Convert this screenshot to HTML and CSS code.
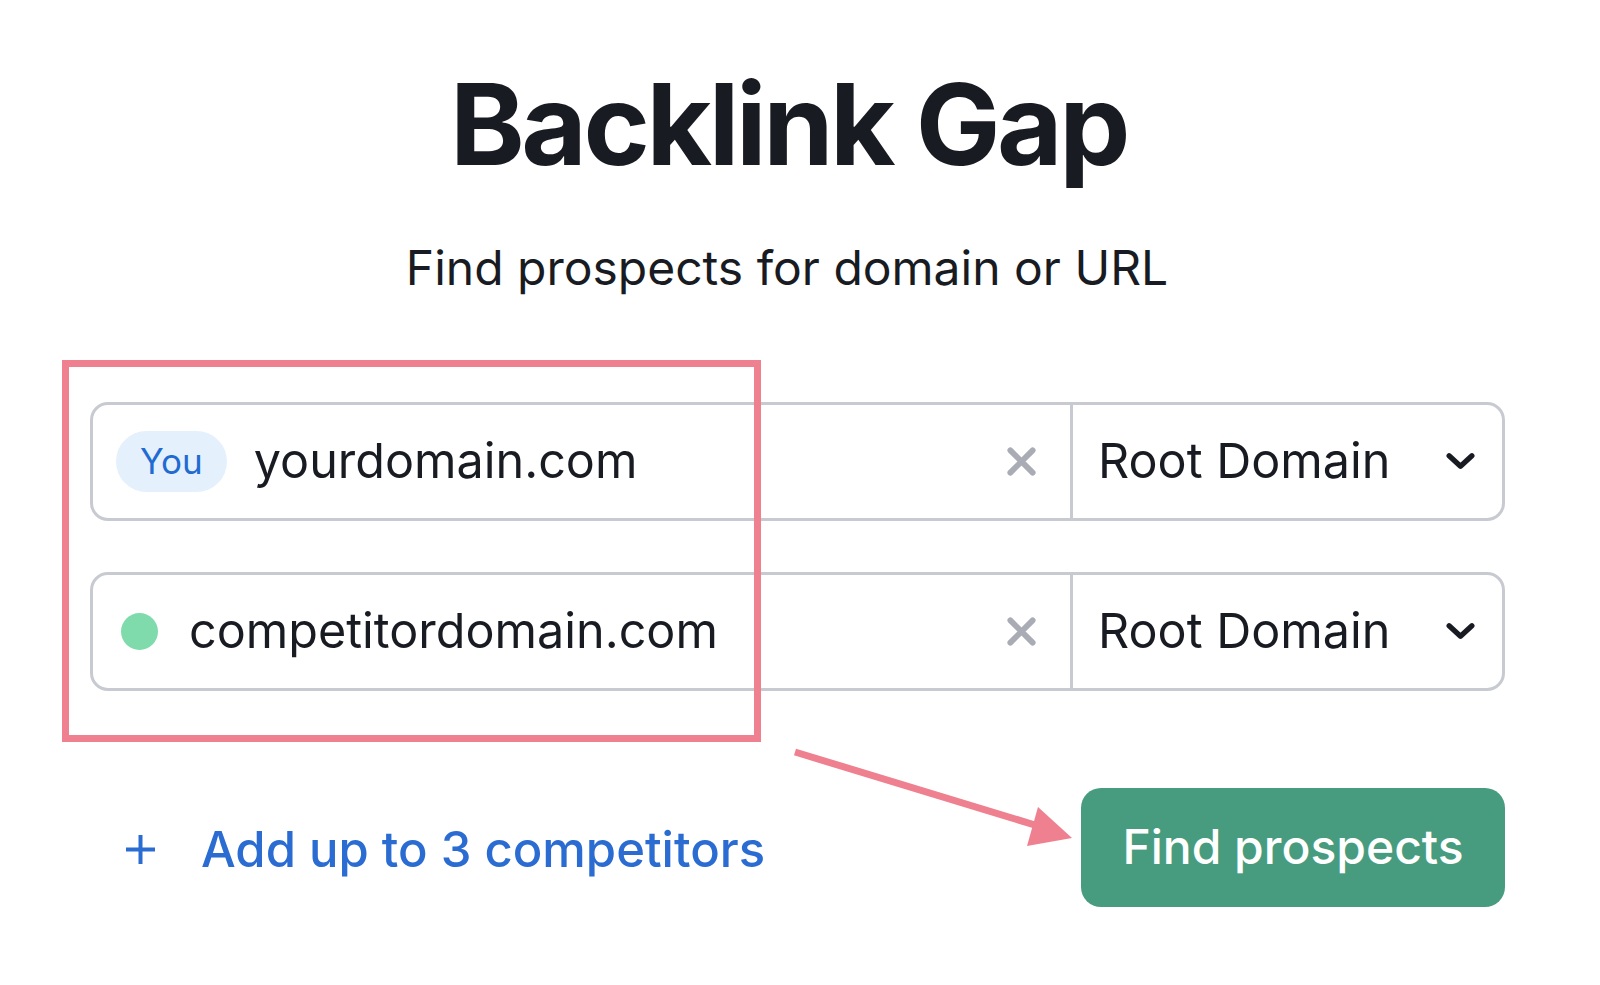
FILE: index.html
```html
<!DOCTYPE html>
<html lang="en">
<head>
<meta charset="utf-8">
<title>Backlink Gap</title>
<link rel="stylesheet" href="styles.css">
</head>
<body>
<main class="page">
  <h1 class="title">Backlink Gap</h1>
  <p class="subtitle">Find prospects for domain or URL</p>
  <div class="form">
    <div class="row">
      <div class="field">
        <span class="badge">You</span>
        <span class="value">yourdomain.com</span>
        <svg class="clear" viewBox="0 0 32 32" width="31" height="31"><path d="M4.5 4.5L27.5 27.5M27.5 4.5L4.5 27.5" stroke="#a9abb5" stroke-width="6" stroke-linecap="round" fill="none"/></svg>
      </div>
      <div class="select">
        <span class="select-text">Root Domain</span>
        <svg class="chev" viewBox="0 0 32 20" width="31" height="19"><path d="M4 4L16 15L28 4" stroke="#191b23" stroke-width="5.5" stroke-linecap="round" stroke-linejoin="round" fill="none"/></svg>
      </div>
    </div>
    <div class="row">
      <div class="field">
        <span class="dot"></span>
        <span class="value">competitordomain.com</span>
        <svg class="clear" viewBox="0 0 32 32" width="31" height="31"><path d="M4.5 4.5L27.5 27.5M27.5 4.5L4.5 27.5" stroke="#a9abb5" stroke-width="6" stroke-linecap="round" fill="none"/></svg>
      </div>
      <div class="select">
        <span class="select-text">Root Domain</span>
        <svg class="chev" viewBox="0 0 32 20" width="31" height="19"><path d="M4 4L16 15L28 4" stroke="#191b23" stroke-width="5.5" stroke-linecap="round" stroke-linejoin="round" fill="none"/></svg>
      </div>
    </div>
    <div class="actions">
      <a class="add" href="#">
        <svg class="plus" viewBox="0 0 31 31" width="31" height="31"><path d="M15.5 1V30M1 15.5H30" stroke="#2a6cd1" stroke-width="4" fill="none"/></svg>
        <span>Add up to 3 competitors</span>
      </a>
      <button class="find" type="button">Find prospects</button>
    </div>
    <div class="highlight"></div>
    <svg class="arrow" viewBox="0 0 320 120" width="320" height="120">
      <path d="M15 13L268 90" stroke="#ef808f" stroke-width="7" fill="none"/>
      <path d="M292 99L247 107L258 68Z" fill="#ef808f"/>
    </svg>
  </div>
</main>
</body>
</html>
```
FILE: styles.css
```css
* { box-sizing: border-box; }
html, body { margin: 0; background: #ffffff; }
body {
  font-family: Inter, "Noto Sans", "Liberation Sans", sans-serif;
  color: #191b23;
}
.page {
  width: 1600px;
  height: 985px;
  padding: 56px 0 0 90px;
}
.title {
  margin: 0;
  width: 1415px;
  text-align: center;
  font-size: 113px;
  font-weight: 700;
  line-height: 136px;
  letter-spacing: -3.4px;
  padding-right: 18px;
}
.subtitle {
  margin: 48px 0 0;
  width: 1415px;
  text-align: center;
  font-size: 48px;
  line-height: 56px;
  font-weight: 400;
  padding-right: 21px;
}
.form {
  position: relative;
  width: 1415px;
  margin-top: 106px;
  display: flex;
  flex-direction: column;
  gap: 51px;
}
.row {
  display: flex;
  height: 119px;
  border: 3px solid #c8cad1;
  border-radius: 18px;
}
.field {
  width: 980px;
  display: flex;
  align-items: center;
  padding: 0 33px 0 23px;
  border-right: 3px solid #c8cad1;
}
.badge {
  background: #e5f0fd;
  color: #1f6bd1;
  font-size: 35px;
  line-height: 61px;
  height: 61px;
  padding: 0 24px;
  border-radius: 31px;
  margin-right: 27px;
}
.dot {
  width: 37px;
  height: 37px;
  border-radius: 50%;
  background: #80dbac;
  margin: 0 31px 0 5px;
}
.value {
  flex: 1;
  font-size: 48.5px;
  line-height: 58px;
  padding-bottom: 2px;
}
.clear { flex: none; }
.select {
  flex: 1;
  display: flex;
  align-items: center;
  padding: 0 26px 0 25px;
}
.select-text {
  flex: 1;
  font-size: 48.5px;
  line-height: 58px;
  padding-bottom: 2px;
}
.chev { flex: none; }
.actions {
  display: flex;
  align-items: center;
  justify-content: space-between;
  margin-top: 46px;
}
.add {
  display: flex;
  align-items: center;
  gap: 45px;
  margin-left: 35px;
  color: #2a6cd1;
  text-decoration: none;
  font-size: 49px;
  font-weight: 500;
  padding-top: 4px;
}
.plus { flex: none; }
.find {
  width: 424px;
  height: 119px;
  border: 0;
  border-radius: 20px;
  background: #479c80;
  color: #ffffff;
  font-family: inherit;
  font-size: 48px;
  font-weight: 500;
  padding: 0 0 2px;
}
.highlight {
  position: absolute;
  left: -28px;
  top: -42px;
  width: 699px;
  height: 382px;
  border: 7px solid #ef808f;
}
.arrow {
  position: absolute;
  left: 690px;
  top: 337px;
}
```
